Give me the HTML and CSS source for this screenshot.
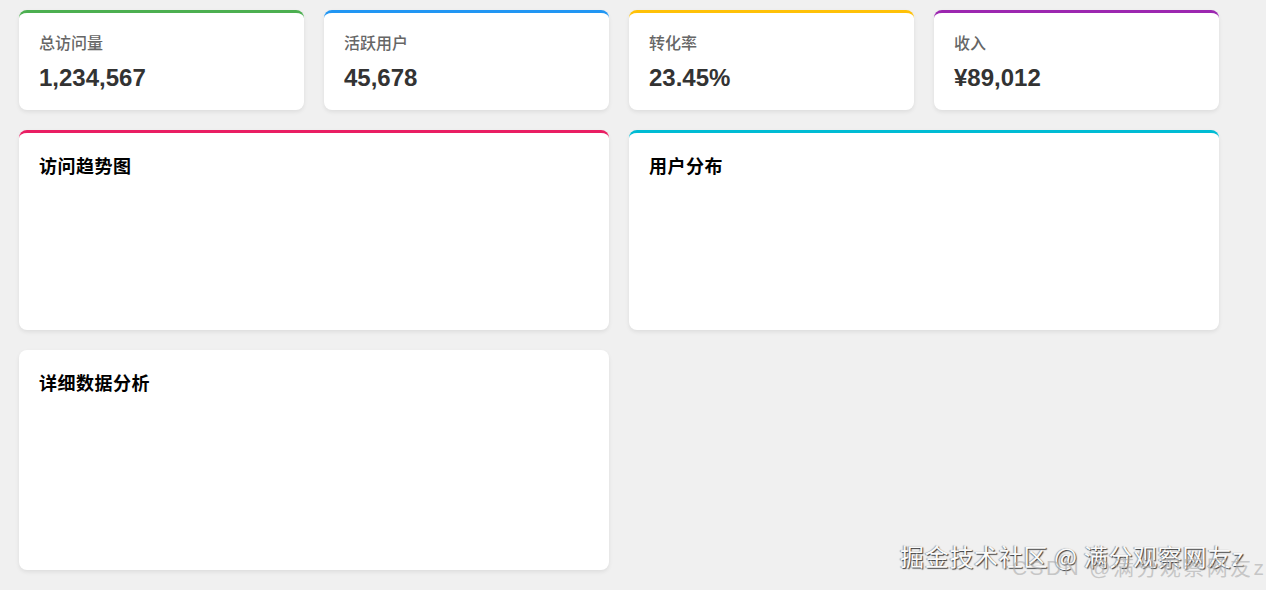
FILE: index.html
```html
<!DOCTYPE html>
<html lang="zh-CN">
<head>
<meta charset="utf-8">
<title>Dashboard</title>
<link rel="stylesheet" href="styles.css">
</head>
<body>
<div class="dashboard">
  <div class="stat-card green">
    <div class="stat-label">总访问量</div>
    <div class="stat-value">1,234,567</div>
  </div>
  <div class="stat-card blue">
    <div class="stat-label">活跃用户</div>
    <div class="stat-value">45,678</div>
  </div>
  <div class="stat-card yellow">
    <div class="stat-label">转化率</div>
    <div class="stat-value">23.45%</div>
  </div>
  <div class="stat-card purple">
    <div class="stat-label">收入</div>
    <div class="stat-value">¥89,012</div>
  </div>
  <div class="chart-card pink">
    <h3 class="card-title">访问趋势图</h3>
  </div>
  <div class="chart-card cyan">
    <h3 class="card-title">用户分布</h3>
  </div>
  <div class="table-card">
    <h3 class="card-title">详细数据分析</h3>
  </div>
</div>
<div class="wm wm-juejin">掘金技术社区 @ 满分观察网友z</div>
<div class="wm wm-csdn">CSDN @满分观察网友z</div>
</body>
</html>
```
FILE: styles.css
```css
html, body {
  margin: 0;
  padding: 0;
  background: #f0f0f0;
  overflow: hidden;
}
body {
  font-family: "Liberation Sans", "Noto Sans CJK SC", Arial, sans-serif;
  height: 590px;
  position: relative;
}
.dashboard {
  width: 1200px;
  padding: 10px 0 0 19px;
  display: grid;
  grid-template-columns: repeat(4, 1fr);
  gap: 20px;
}
.stat-card, .chart-card, .table-card {
  background: #fff;
  border-radius: 8px;
  box-shadow: 0 2px 4px rgba(0, 0, 0, 0.08);
  box-sizing: border-box;
  padding: 21px 20px 18px;
}
.stat-card {
  height: 100px;
  border-top: 3px solid #ccc;
}
.chart-card {
  grid-column: span 2;
  height: 200px;
  border-top: 3px solid #ccc;
  padding-top: 22px;
}
.table-card {
  grid-column: span 2;
  height: 220px;
  padding-top: 22px;
}
.stat-card.green { border-top-color: #4caf50; }
.stat-card.blue { border-top-color: #2196f3; }
.stat-card.yellow { border-top-color: #ffc107; }
.stat-card.purple { border-top-color: #9c27b0; }
.chart-card.pink { border-top-color: #e91e63; }
.chart-card.cyan { border-top-color: #00bcd4; }
.stat-label {
  font-size: 16px;
  line-height: 20px;
  font-weight: 500;
  color: #666;
  margin-bottom: 10px;
}
.stat-value {
  font-size: 24px;
  line-height: 28px;
  font-weight: bold;
  color: #333;
}
.card-title {
  margin: 0;
  font-size: 18px;
  line-height: 24px;
  letter-spacing: 0.5px;
  font-weight: bold;
  color: #000;
}
.wm {
  position: absolute;
  white-space: nowrap;
  font-family: "Noto Sans CJK SC", "Liberation Sans", sans-serif;
}
.wm-juejin {
  left: 900px;
  top: 543px;
  font-size: 24px;
  line-height: 26px;
  letter-spacing: 0.7px;
  color: #fafafa;
  text-shadow: 1px 1px 1px rgba(0, 0, 0, 0.75), -1px 0 1px rgba(0, 0, 0, 0.35);
}
.wm-csdn {
  left: 1012px;
  top: 555px;
  font-family: "Liberation Sans", "Noto Sans CJK SC", sans-serif;
  font-size: 21px;
  line-height: 26px;
  letter-spacing: 2.4px;
  color: rgba(170, 170, 170, 0.6);
}
```
